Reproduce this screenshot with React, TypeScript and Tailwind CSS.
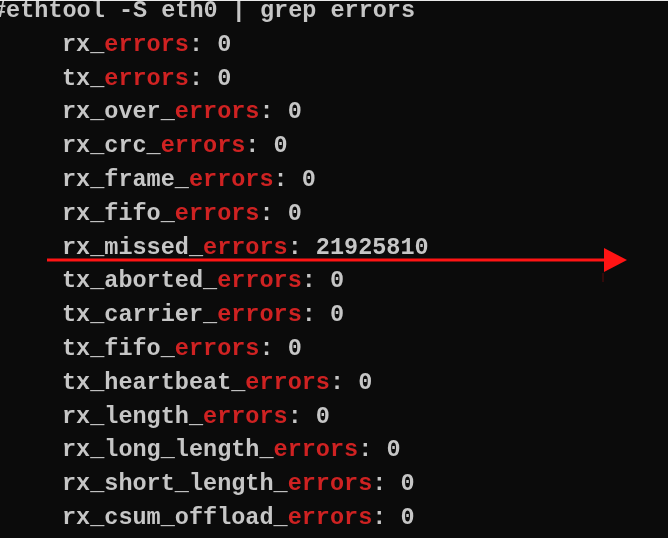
const rows: [string, string][] = [
  ["rx_", ": 0"],
  ["tx_", ": 0"],
  ["rx_over_", ": 0"],
  ["rx_crc_", ": 0"],
  ["rx_frame_", ": 0"],
  ["rx_fifo_", ": 0"],
  ["rx_missed_", ": 21925810"],
  ["tx_aborted_", ": 0"],
  ["tx_carrier_", ": 0"],
  ["tx_fifo_", ": 0"],
  ["tx_heartbeat_", ": 0"],
  ["rx_length_", ": 0"],
  ["rx_long_length_", ": 0"],
  ["rx_short_length_", ": 0"],
  ["rx_csum_offload_", ": 0"],
];

function Arrow() {
  return (
    <svg className="pointer-events-none absolute left-0 top-0" width="668" height="538">
      <line x1="47" y1="259" x2="608" y2="259" stroke="#ff1414" strokeWidth="3" />
      <polygon points="604,247 627,259 604,271" fill="#ff1414" />
      <line x1="603" y1="272" x2="603" y2="281" stroke="#5a0a0a" strokeWidth="1" />
    </svg>
  );
}

export default function App() {
  return (
    <div className="relative h-[538px] w-[668px] overflow-hidden border-t border-[#e8e8e8] bg-[#0b0b0b] font-['Liberation_Mono','Courier_New',monospace] text-[23.5px] font-bold leading-[33.8px] text-[#c6c6c6]">
      <div className="-mt-[7px] whitespace-pre blur-[0.3px]">
        <div className="-ml-[8px]">#ethtool -S eth0 | grep errors</div>
        {rows.map(([name, rest]) => (
          <div key={name} className="pl-[62px]">
            {name}
            <span className="text-[#cf2222]">errors</span>
            {rest}
          </div>
        ))}
      </div>
      <Arrow />
    </div>
  );
}
